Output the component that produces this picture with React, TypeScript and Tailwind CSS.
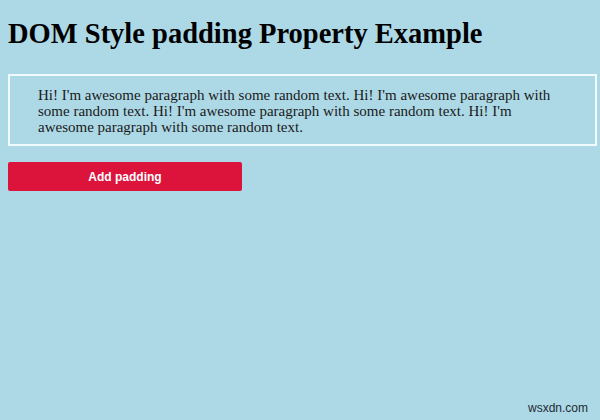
export default function App() {
  const text =
    "Hi! I'm awesome paragraph with some random text. Hi! I'm awesome paragraph with some random text. Hi! I'm awesome paragraph with some random text. Hi! I'm awesome paragraph with some random text.";
  return (
    <div className="relative w-[600px] h-[420px] bg-[#add8e6] overflow-hidden pl-2">
      <h1 className="pt-[18px] text-[28.5px] leading-[32px] font-bold text-black [font-family:'Liberation_Serif',serif]">
        DOM Style padding Property Example
      </h1>
      <p className="mt-[24px] w-[589px] border-2 border-[#f0fbfd] pl-[28px] pr-[30px] pt-[11px] pb-[9px] text-[15px] leading-[16px] text-[#1a1a1a] [font-family:'Liberation_Serif',serif]">
        {text}
      </p>
      <button className="mt-[16px] w-[234px] h-[29px] rounded-[2px] bg-[#dc143c] text-white text-[12px] font-bold [font-family:'Liberation_Sans',sans-serif]">
        Add padding
      </button>
      <div className="absolute right-[12px] bottom-[3px] text-[12px] text-[#1e2a33] [font-family:'Liberation_Sans',sans-serif]">
        wsxdn.com
      </div>
    </div>
  );
}
